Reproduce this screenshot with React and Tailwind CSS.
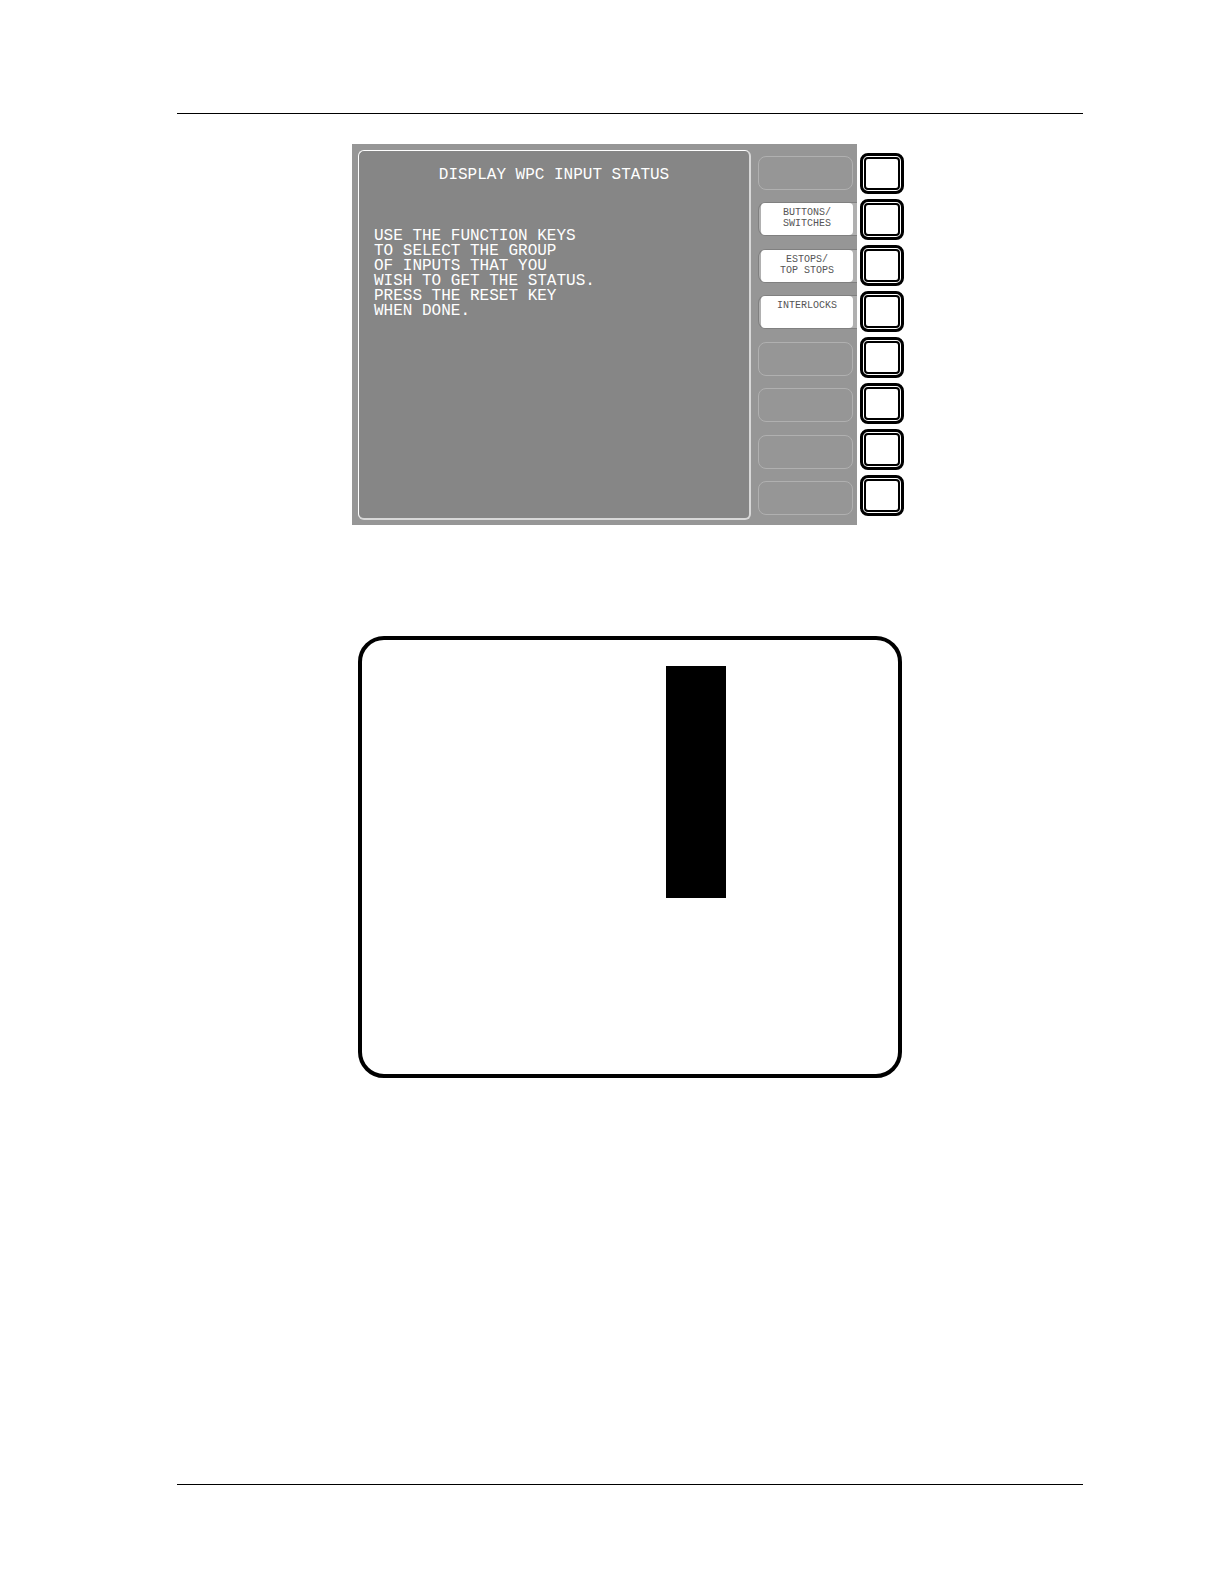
import React from 'react'

const functionKeys = [
  { id: 'F1', lines: [] },
  { id: 'F2', lines: ['BUTTONS/', 'SWITCHES'] },
  { id: 'F3', lines: ['ESTOPS/', 'TOP STOPS'] },
  { id: 'F4', lines: ['INTERLOCKS'] },
  { id: 'F5', lines: [] },
  { id: 'F6', lines: [] },
  { id: 'F7', lines: [] },
  { id: 'F8', lines: [] },
]

const instructions = [
  'USE THE FUNCTION KEYS',
  'TO SELECT THE GROUP',
  'OF INPUTS THAT YOU',
  'WISH TO GET THE STATUS.',
  'PRESS THE RESET KEY',
  'WHEN DONE.',
]

function KeyLabel({ lines }) {
  if (lines.length === 0) {
    return <div className="mr-1 h-[34px] rounded-lg border border-[#b0b0b0]" />
  }

  return (
    <div className="flex h-[34px] rounded-l-lg border-y border-l border-[#808080] bg-[#b0b0b0]">
      <div className="ml-0.5 mr-1 flex-1 rounded-[4px] bg-white pt-1 text-center text-[10px] leading-[11px] text-[#555555]">
        {lines.map((line) => (
          <p key={line}>{line}</p>
        ))}
      </div>
    </div>
  )
}

function HardKey({ label }) {
  return (
    <button
      type="button"
      aria-label={label}
      className="flex h-[41px] w-11 rounded-lg border-[3px] border-black bg-white p-px active:bg-gray-200"
    >
      <span className="h-full w-full rounded-[4px] border-2 border-black" />
    </button>
  )
}

function Screen() {
  return (
    <section className="flex w-[505px] bg-[#969696] pt-1.5 pb-[5px] pl-1.5 font-['Liberation_Mono',monospace]">
      <div className="w-[393px] rounded-md border border-r-2 border-b-2 border-white border-r-[#d8d8d8] border-b-[#d8d8d8] bg-[#868686] px-[15px] pt-[17px] text-base leading-[15px] text-white">
        <h1 className="text-center">DISPLAY WPC INPUT STATUS</h1>
        <div className="mt-[46px] whitespace-nowrap">
          {instructions.map((line) => (
            <p key={line}>{line}</p>
          ))}
        </div>
      </div>
      <div className="ml-[7px] flex flex-1 flex-col justify-between pt-1.5 pb-[5px]">
        {functionKeys.map((k) => (
          <KeyLabel key={k.id} lines={k.lines} />
        ))}
      </div>
    </section>
  )
}

function App() {
  return (
    <div className="min-h-screen w-full bg-white pt-[113px] pb-[99px] pl-[177px] pr-[141px] antialiased">
      <main className="flex min-h-[1372px] flex-col items-center border-y border-black pt-[30px]">
        {/* Screen with the hard keys next to it */}
        <div className="mr-1 flex">
          <Screen />
          <div className="ml-[3px] flex flex-col gap-[5px] py-[9px]">
            {functionKeys.map((k) => (
              <HardKey key={k.id} label={k.id} />
            ))}
          </div>
        </div>

        {/* Blank display */}
        <section className="mt-[111px] flex h-[442px] w-[544px] justify-center rounded-[26px] border-4 border-black pt-[26px]">
          <div className="ml-[132px] h-[232px] w-[60px] bg-black" />
        </section>
      </main>
    </div>
  )
}

export default App
